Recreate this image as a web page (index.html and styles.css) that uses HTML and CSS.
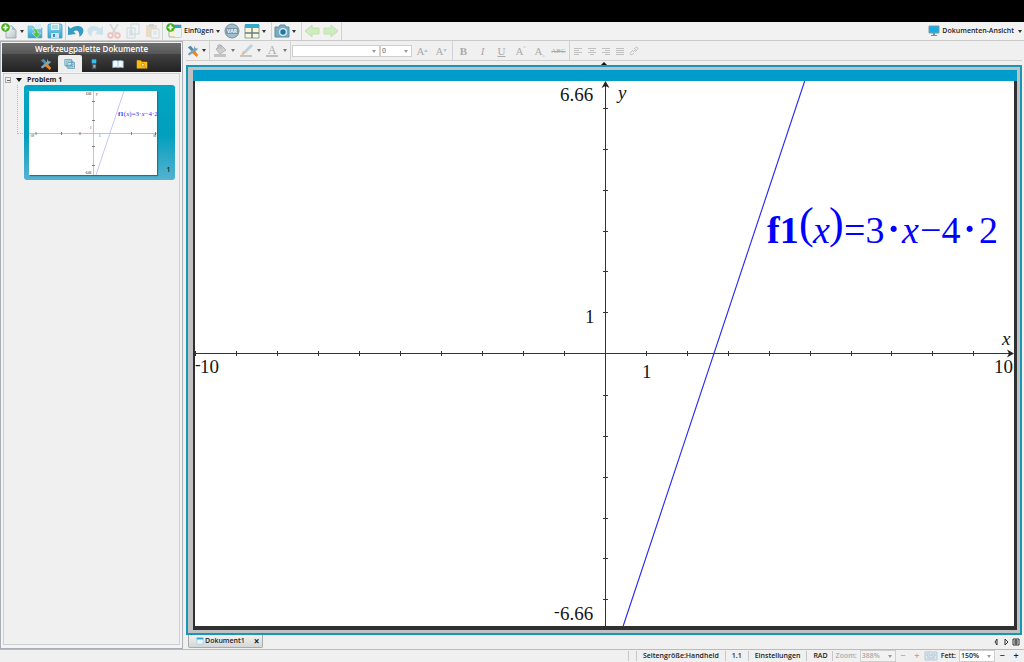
FILE: index.html
```html
<!DOCTYPE html>
<html lang="de">
<head>
<meta charset="utf-8">
<title>Dokument1</title>
<link rel="stylesheet" href="styles.css">
</head>
<body>
<svg class="defs" aria-hidden="true">
  <defs>
    <linearGradient id="sky" x1="0" y1="0" x2="0" y2="1"><stop offset="0" stop-color="#8fd8f5"/><stop offset="1" stop-color="#2f9fce"/></linearGradient>
    <linearGradient id="paper" x1="0" y1="0" x2="1" y2="1"><stop offset="0" stop-color="#ffffff"/><stop offset="1" stop-color="#b9c2c6"/></linearGradient>
    <symbol id="plus" viewBox="0 0 8 8"><circle cx="4" cy="4" r="3.800" fill="#43ad1c"/><path d="M4 1.600v4.800M1.600 4h4.800" stroke="#fff" stroke-width="1.500"/></symbol>
    <symbol id="tools" viewBox="0 0 16 16"><path d="M1 3l4-2 8 10-2 2L5 7z" fill="#4b8cae"/><path d="M10 1l1 3 4 1-3 3-9 6-2-2 8-7z" fill="#7fa3b4"/><path d="M9 8l6 5-2 3-6-5z" fill="#f2861a"/></symbol>
    <symbol id="arrow" viewBox="0 0 16 16"><path d="M1 8l7-6v3h7v6H8v3z" fill="#cfecc0" stroke="#bfe2ae"/></symbol>
    <symbol id="curl" viewBox="0 0 16 14"><path d="M0 2v9l8-1-2.500-2.500c3-2 6-1 6 5.500 6-4 5-11-2-11-3 0-5 1-7 2.500z"/></symbol>
  </defs>
</svg>

<div class="screen-top"></div>

<header class="toolbar">
  <div class="group">
    <button class="icon" aria-label="Neu"><svg viewBox="0 0 16 16"><path d="M5 3h6l4 4v8H5z" fill="url(#paper)" stroke="#8fa3ac" stroke-width=".8"/><path d="M11 3v4h4" fill="#9fc6d8"/><use href="#plus" width="9" height="9"/></svg></button>
    <button class="drop" aria-label="Neu-Menü"></button>
    <button class="icon" aria-label="Öffnen"><svg viewBox="0 0 16 16"><path d="M1 3h5l1 2h8v10H1z" fill="url(#sky)" stroke="#5fb1d3" stroke-width=".6"/><path d="M8 1h6v5H8z" fill="#d7eef7"/><path d="M5 6c3-1 6 0 6 4h3l-4 5-5-5h3c0-2-1-3-3-4z" fill="#5cc038" stroke="#e8f6e0" stroke-width=".5"/></svg></button>
    <button class="icon save" aria-label="Speichern"><svg viewBox="0 0 16 16"><path d="M2 1h12l1 1v13H1V2z" fill="url(#sky)" stroke="#4b9fc4" stroke-width=".8"/><path d="M4 1h8v6H4z" fill="#e4f4fa"/><path d="M4 10h8v5H4z" fill="#c7e5f1"/><path d="M6 11h2v3H6z" fill="#3791b9"/><path d="M5 3h6M5 5h6" stroke="#7fbbd5"/></svg></button>
  </div>
  <div class="group spaced">
    <button class="icon" aria-label="Rückgängig"><svg viewBox="0 0 16 16"><use href="#curl" y="1" width="16" height="14" fill="#359ac5"/></svg></button>
    <button class="icon faded" aria-label="Wiederholen" disabled><svg viewBox="0 0 16 16"><g transform="translate(16 1) scale(-1 1)"><use href="#curl" width="16" height="14" fill="#83c7e3"/></g></svg></button>
    <button class="icon faded" aria-label="Ausschneiden" disabled><svg viewBox="0 0 16 16"><path d="M4 1l6 10M12 1L6 11" stroke="#9ca5aa" stroke-width="1.600"/><g fill="none" stroke="#e26558" stroke-width="1.800"><circle cx="4.500" cy="12.500" r="2.300"/><circle cx="11.500" cy="12.500" r="2.300"/></g></svg></button>
    <button class="icon faded" aria-label="Kopieren" disabled><svg viewBox="0 0 16 16"><g fill="#eef5f8" stroke="#83aabd"><path d="M6 1h8v10H6zM2 5h8v10H2z"/><path d="M4 8h4M4 10h4M4 12h4"/></g></svg></button>
    <button class="icon faded" aria-label="Einfügen" disabled><svg viewBox="0 0 16 16"><path d="M2 2h11v12H2z" fill="#e2b36c"/><path d="M5 1h5v3H5z" fill="#8ba2ad"/><path d="M7 6h8v9H7z" fill="#f4f8f9" stroke="#91aebb"/><path d="M9 9h4M9 11h4" stroke="#94b5c4"/></svg></button>
  </div>
  <div class="group">
    <button class="insert"><svg viewBox="0 0 16 16"><path d="M3 2h12v12H3z" fill="#faf3d6" stroke="#809dab" stroke-width=".7"/><path d="M3 2h12v3H3z" fill="#2ca3cd"/><path d="M9 5h6v9H9z" fill="#e9f4f7"/><use href="#plus" width="9" height="9"/></svg><span>Einfügen</span></button>
    <button class="drop" aria-label="Einfügen-Menü"></button>
    <button class="icon" aria-label="Variablen"><svg viewBox="0 0 16 16"><circle cx="8" cy="8" r="7" fill="#a3bccb" stroke="#7591a1"/><path d="M2 5h12v6H2z" fill="#7995a7"/><text x="8" y="10" class="var-label">VAR</text></svg></button>
    <button class="icon layout" aria-label="Seitenlayout"><svg viewBox="0 0 16 16"><path d="M1 2h14v13H1z" fill="#fcf6d5" stroke="#708d9a" stroke-width=".8"/><path d="M1 1h14v4H1z" fill="#36a9cd"/><path d="M8 5v10M1 10h14" stroke="#617e89" stroke-width="1.400"/></svg></button>
    <button class="drop" aria-label="Layout-Menü"></button>
  </div>
  <div class="group spaced">
    <button class="icon" aria-label="Bildschirmfoto"><svg viewBox="0 0 16 16"><path d="M1 4h4l1-2h5l1 2h3v10H1z" fill="#76adc6" stroke="#608fa5"/><circle cx="9" cy="9" r="4" fill="#d5edf5"/><circle cx="9" cy="9" r="2.700" fill="#2378a1"/><path d="M2 6h2" stroke="#e79a41"/></svg></button>
    <button class="drop" aria-label="Foto-Menü"></button>
  </div>
  <div class="group spaced arrows">
    <button class="icon" aria-label="Zurück" disabled><svg viewBox="0 0 16 16"><use href="#arrow" width="16" height="16"/></svg></button>
    <button class="icon" aria-label="Vorwärts" disabled><svg viewBox="0 0 16 16"><g transform="translate(16 0) scale(-1 1)"><use href="#arrow" width="16" height="16"/></g></svg></button>
  </div>
  <button class="view-menu"><svg viewBox="0 0 12 12"><path d="M1 1h10v7H1z" fill="#18ace6" stroke="#7b9caa"/><path d="M5 8h2v2h2v1H3v-1h2z" fill="#7793a0"/></svg><span>Dokumenten-Ansicht</span><i class="caret"></i></button>
</header>

<main class="workspace">
  <aside class="sidebar">
    <section class="palette">
      <h1>Werkzeugpalette Dokumente</h1>
      <nav class="palette-tabs">
        <button aria-label="Dokumentwerkzeuge"><svg viewBox="0 0 16 16"><use href="#tools" width="16" height="16"/></svg></button>
        <button class="active" aria-label="Seitensortierer"><svg viewBox="0 0 16 16"><g fill="#d3eaf3" stroke="#5b9ab4"><path d="M1 2h9v8H1zM3 4h9v8H3zM5 6h9v8H5z"/><path d="M7 12l5-4M7 8l5 4" fill="none"/></g></svg></button>
        <button aria-label="Handheld"><svg viewBox="0 0 16 16"><path d="M5 1h6v14H5z" fill="#404e56"/><path d="M5 2h6v5H5z" fill="#35bff0"/><path d="M7 9h3v4H7z" fill="#a3adb1"/></svg></button>
        <button aria-label="Dienstprogramme"><svg viewBox="0 0 16 16"><path d="M1 4c3-1 5-1 7 0 2-1 4-1 7 0v9c-3-1-5-1-7 0-2-1-4-1-7 0z" fill="#f4faff" stroke="#7fb3d0"/><path d="M8 4v9" stroke="#8ab1c7"/></svg></button>
        <button aria-label="Inhalts-Explorer"><svg viewBox="0 0 16 16"><path d="M1 3h5l2 2h7v9H1z" fill="#fdbc09"/><circle cx="9" cy="9" r="2" fill="#fff3b4" stroke="#a67c13"/><path d="M11 11l3 3" stroke="#ae780c"/></svg></button>
      </nav>
    </section>
    <section class="tree">
      <div class="problem"><button class="collapse" aria-label="Zuklappen"></button><i class="open-mark"></i><h2>Problem 1</h2></div>
      <div class="branch">
        <button class="thumb" aria-label="Seite 1">
          <svg class="preview" viewBox="29 91 128 84">
            <path d="M29 133.500H157M93.500 91V175" stroke="#aaa" fill="none" stroke-width=".7"/>
            <path d="M36 132v3M61.500 132v3M80 132v3M131.500 132v3M155.500 132v3M92 101.500h3M92 120.500h3M92 146.500h3M92 165.500h3" stroke="#555" stroke-width=".7"/>
            <path d="M124 91L96 175" stroke="#b8b8fa" stroke-width=".8"/>
            <g class="tiny"><text x="86" y="95">6.66</text><text x="96" y="95">y</text><text x="30" y="137">-10</text><text x="90" y="129">1</text><text x="99" y="137">1</text><text x="153" y="137">10</text><text x="85" y="174">-6.66</text></g>
            <text class="mini-formula" x="118" y="116"><tspan class="bold">f1</tspan>(<tspan class="italic">x</tspan>)=3·<tspan class="italic">x</tspan>−4·2</text>
          </svg>
          <span class="page-no">1</span>
        </button>
      </div>
    </section>
  </aside>

  <section class="editor">
    <div class="format">
      <div class="group">
        <button class="icon small" aria-label="Werkzeuge"><svg viewBox="0 0 16 16"><use href="#tools" width="16" height="16"/></svg></button>
        <button class="drop" aria-label="Werkzeug-Menü"></button>
      </div>
      <div class="group colors">
        <button class="icon" aria-label="Füllfarbe" disabled><svg viewBox="0 0 16 16"><path d="M4 6l5-4 5 5-6 4z" fill="#cfcfcf" stroke="#b5b5b5"/><path d="M6 6V2h3v4" fill="none" stroke="#aaa"/><path d="M2 11h12v3H2z" fill="#c3c3c3"/></svg></button><button class="drop" aria-label="Füllfarben" disabled></button>
        <button class="icon" aria-label="Linienfarbe" disabled><svg viewBox="0 0 16 16"><path d="M13 1l2 2-7 7-3-1z" fill="#b9d2df"/><path d="M5 8l3 2-5 3z" fill="#dfbd90"/><path d="M2 12h12v2H2z" fill="#c5c5c5"/></svg></button><button class="drop" aria-label="Linienfarben" disabled></button>
        <button class="icon" aria-label="Textfarbe" disabled><svg viewBox="0 0 16 16"><text x="8" y="11" class="color-letter">A</text><path d="M2 12h12v2H2z" fill="#bebebe"/></svg></button><button class="drop" aria-label="Textfarben" disabled></button>
      </div>
      <div class="group fonts">
        <span class="select font-name"><select aria-label="Schriftart" disabled><option></option></select></span>
        <span class="select font-size"><select aria-label="Schriftgröße" disabled><option>0</option></select></span>
        <button class="letter first" aria-label="Größer" disabled>A<i class="caret up"></i></button>
        <button class="letter" aria-label="Kleiner" disabled>A<i class="caret"></i></button>
      </div>
      <div class="group styles">
        <button class="letter bold" disabled>B</button><button class="letter italic" disabled>I</button><button class="letter underline" disabled>U</button><button class="letter" disabled>A<sup>a</sup></button><button class="letter" disabled>A<sub>a</sub></button><button class="letter strike" disabled>ABC</button>
      </div>
      <div class="group align">
        <button aria-label="Links" disabled><svg viewBox="0 0 10 10"><path d="M1 2.500h8M1 4.500h5M1 6.500h8M1 8.500h5"/></svg></button>
        <button aria-label="Zentriert" disabled><svg viewBox="0 0 10 10"><path d="M1 2.500h8M3 4.500h4M1 6.500h8M3 8.500h4"/></svg></button>
        <button aria-label="Rechts" disabled><svg viewBox="0 0 10 10"><path d="M1 2.500h8M4 4.500h5M1 6.500h8M4 8.500h5"/></svg></button>
        <button aria-label="Blocksatz" disabled><svg viewBox="0 0 10 10"><path d="M1 2.500h8M1 4.500h8M1 6.500h8M1 8.500h8"/></svg></button>
        <button aria-label="Link" disabled><svg viewBox="0 0 10 10"><path d="M4 6l3-3M5 3l1-1c2-2 4 0 2 2L6 6M5 7L4 8c-2 2-4 0-2-2l2-2" fill="none"/></svg></button>
      </div>
    </div>
    <button class="fold" aria-label="Einklappen"></button>

    <div class="document">
      <div class="title-strip"></div>
      <div class="page">
        <svg class="graph" viewBox="195 81 819 545" preserveAspectRatio="xMidYMid meet" role="img" aria-label="Graph von f1">
          <g class="axis">
            <path d="M195 353.500H1013M605.500 82V626"/>
            <path d="M195.500 351v5M236.500 351v5M277.500 351v5M318.500 351v5M359.500 351v5M400.500 351v5M441.500 351v5M482.500 351v5M523.500 351v5M564.500 351v5M605.500 351v5M646.500 351v5M687.500 351v5M728.500 351v5M769.500 351v5M810.500 351v5M851.500 351v5M891.500 351v5M932.500 351v5M973.500 351v5"/>
            <path d="M603 108.500h5M603 149.500h5M603 190.500h5M603 231.500h5M603 271.500h5M603 312.500h5M603 353.500h5M603 395.500h5M603 436.500h5M603 477.500h5M603 518.500h5M603 558.500h5M603 599.500h5"/>
          </g>
          <path d="M605.500 81l4 7-4-2-4 2zM1014 353.500l-7-4 2 4-2 4z" fill="#222"/>
          <path d="M804.700 81L623.200 626" stroke="#2424ee" stroke-width="1.100"/>
          <g class="labels">
            <text x="560" y="101">6.66</text>
            <text class="italic" x="618" y="99">y</text>
            <text x="585" y="323">1</text>
            <text x="642" y="378">1</text>
            <text x="200" y="373">10</text><text class="minus" x="195" y="370">-</text>
            <text class="italic" x="1002" y="345">x</text>
            <text x="994" y="373">10</text>
            <text x="560" y="620">6.66</text><text class="minus" x="554" y="617">-</text>
          </g>
          <g class="formula">
            <text class="bold" x="767" y="243">f1</text>
            <text class="paren" x="799" y="238">(</text>
            <text class="italic" x="813" y="243">x</text>
            <text class="paren" x="829" y="238">)</text>
            <text x="844" y="243">=3</text>
            <text class="dot" x="885" y="246">·</text>
            <text class="italic" x="902" y="243">x</text>
            <text x="920" y="243">−4</text>
            <text class="dot" x="961" y="246">·</text>
            <text x="979" y="243">2</text>
          </g>
        </svg>
      </div>
    </div>

    <div class="tabs">
      <div class="tab"><svg viewBox="0 0 10 10"><path d="M1 1h8v8H1z" fill="#e8f7fd" stroke="#9ed0e5"/><path d="M1 1h8v2H1z" fill="#2a9fca"/></svg><span>Dokument1</span><button aria-label="Schließen">×</button></div>
      <div class="tab-nav">
        <button aria-label="Vorheriges"><svg viewBox="0 0 8 8"><path d="M5 1v6L3 4z"/></svg></button>
        <button aria-label="Nächstes"><svg viewBox="0 0 8 8"><path d="M3 1v6l3-3z"/></svg></button>
        <button aria-label="Liste"><svg viewBox="0 0 8 8"><path d="M1 1h6v6H1zM2 3h4M2 5h4M4 1v6"/></svg></button>
      </div>
    </div>
  </section>
</main>

<footer class="status">
  <span class="cell empty"></span>
  <span class="cell">Seitengröße:Handheld</span>
  <span class="cell version">1.1</span>
  <button class="cell">Einstellungen</button>
  <button class="cell angle">RAD</button>
  <label class="muted" for="zoom">Zoom:</label>
  <span class="select zoom"><select id="zoom" disabled><option>388%</option></select></span>
  <button class="step muted" disabled>−</button>
  <button class="step muted" disabled>+</button>
  <button class="fit" aria-label="Einpassen" disabled><svg viewBox="0 0 14 10"><path d="M1 1h12v8H1z" fill="#dfe9f2" stroke="#b7c7d5"/><path d="M3 3h3v2H3zM8 3h3v2H8zM3 7h8" fill="#fff" stroke="#b1c3d2"/></svg></button>
  <label for="bold">Fett:</label>
  <span class="select boldness"><select id="bold"><option>150%</option></select></span>
  <button class="step">−</button>
  <button class="step">+</button>
</footer>
</body>
</html>
```

FILE: styles.css
```css
* { box-sizing: border-box; }
body {
  margin: 0;
  height: 100vh;
  display: flex;
  flex-direction: column;
  overflow: hidden;
  background: #f0f0f0;
  color: #1c1c1c;
  font: 600 7px/10px "Open Sans", "Noto Sans", sans-serif;
}
button, select { font: inherit; color: inherit; margin: 0; padding: 0; border: 0; background: none; }
button { display: flex; align-items: center; justify-content: center; flex: none; }
svg { display: block; flex: none; }
h1, h2 { margin: 0; }
.defs { position: absolute; width: 0; height: 0; }
.screen-top { height: 22px; flex: none; background: #000; }

.toolbar { height: 19px; flex: none; display: flex; align-items: center; border-bottom: 1px solid #cbcbcb; background: #f2f2f2; }
.group { display: flex; align-items: center; height: 18px; padding: 0 1px; border-right: 1px solid #d2d2d2; }
.toolbar .group { padding-right: 2px; }
.toolbar .spaced { gap: 3px; padding-left: 2px; }
.icon { width: 16px; height: 16px; }
.icon svg { width: 16px; height: 16px; }
.icon.save, .icon.layout { margin-left: 4px; }
.faded svg { opacity: .35; }
.drop { width: 9px; height: 14px; }
.drop::before, .caret { content: ""; border: 2px solid transparent; border-top: 3px solid #333; border-bottom: 0; }
.drop:disabled::before { border-top-color: #777; }
.spaced .drop { margin-left: -3px; }
.insert { padding-left: 2px; gap: 2px; }
.insert svg { width: 16px; height: 16px; }
.drop + .icon { margin-left: 1px; }
.var-label { font: 700 5px "Open Sans", sans-serif; fill: #fff; text-anchor: middle; }
.view-menu { margin-left: auto; gap: 2px; padding-right: 2px; }
.view-menu svg { width: 12px; height: 12px; }
.view-menu .caret { margin-left: 2px; }

.workspace { flex: 1; min-height: 0; display: flex; border-bottom: 1px solid #b8bbbf; }
.sidebar { width: 183px; flex: none; display: flex; flex-direction: column; padding: 1px; border: 1px solid #a9adb7; background: #f4f4f4; }
.palette { background: #292929; }
.palette h1 { height: 11px; background: linear-gradient(#6e6e6e, #565656); color: #fff; font-size: 8px; line-height: 11px; text-align: center; font-weight: 600; }
.palette-tabs { height: 18px; display: flex; justify-content: center; background: linear-gradient(#414141, #222); padding: 1px 0 0 4px; }
.palette-tabs button { width: 24px; }
.palette-tabs svg { width: 12px; height: 12px; }
.palette-tabs .active { background: #eee; border-radius: 2px 2px 0 0; }
.tree { flex: 1; margin: 1px 1px 2px; padding: 1px; border: 1px solid #d0d0d0; background: #f0f0f0; }
.problem { display: flex; align-items: center; height: 10px; gap: 5px; }
.problem h2 { font-size: 7px; line-height: 10px; font-weight: 700; }
.collapse { width: 6px; height: 6px; border: 1px solid #aaa; }
.collapse::before { content: ""; width: 3px; height: 1px; background: #666; }
.open-mark { width: 6px; border: 3px solid transparent; border-top: 4px solid #111; border-bottom: 0; }
.branch { margin-left: 12px; padding: 0 3px 0 7px; position: relative; }
.branch::before { content: ""; position: absolute; left: 0; top: 0; width: 7px; height: 48px; border: 1px dotted #bbb; border-width: 0 0 1px 1px; }
.thumb { width: 100%; padding: 6px 4px 5px 5px; gap: 9px; align-items: flex-end; border-radius: 3px; position: relative; background: linear-gradient(#00a7c3, #009fbd 52%, #55b2d1); }
.preview { flex: 1; min-width: 0; background: #fff; box-shadow: 1px 1px 1px #376b7b; }
.page-no { font-size: 7px; line-height: 10px; width: 5px; }
.tiny { font: 3px "Liberation Serif", serif; }
.mini-formula { font: 7px "Liberation Serif", serif; fill: #3535ed; }

.editor { flex: 1; min-width: 0; display: flex; flex-direction: column; padding: 0 2px 0 3px; }
.format { height: 20px; flex: none; display: flex; align-items: center; border-bottom: 1px solid #cfcfcf; color: #aaa; }
.format .group { height: 19px; padding: 0 1px; }
.format .small svg { width: 12px; height: 12px; }
.icon.small { width: 12px; }
.format .colors .icon { margin-left: 1px; }
.color-letter { font: 12px "Liberation Serif", serif; fill: #aaa; text-anchor: middle; }
.select { display: inline-flex; position: relative; flex: none; background: #fff; border: 1px solid #cfcfcf; }
.select select { width: 100%; height: 10px; padding-left: 1px; appearance: none; line-height: 10px; opacity: 1; }
.select::after { content: ""; position: absolute; right: 3px; top: 4px; border: 2px solid transparent; border-top: 3px solid #999; border-bottom: 0; pointer-events: none; }
.font-name { width: 88px; }
.font-size { width: 32px; }
.font-size select { color: #888; }
.letter { width: 19px; font: 11px/14px "Liberation Serif", serif; color: #aaa; }
.letter.first { margin-left: 1px; }
.fonts { width: 162px; }
.letter .caret { border-top-color: #a9cfdf; }
.letter .caret.up { border-top: 0; border-bottom: 3px solid #a9cfdf; }
.letter sup, .letter sub { font-size: 5px; line-height: 5px; color: #a9cfdf; }
.letter sup { align-self: flex-start; }
.letter sub { align-self: flex-end; }
.bold { font-weight: 700; }
.italic { font-style: italic; }
.underline { text-decoration: underline; }
.strike { font-size: 7px; text-decoration: line-through; }
.format .align { border: 0; gap: 4px; padding-left: 3px; }
.align svg { width: 10px; height: 10px; stroke: #c0c0c0; stroke-width: 1; }
.fold { align-self: center; height: 4px; }
.fold::before { content: ""; border: 3px solid transparent; border-bottom: 3px solid #111; border-top: 0; }

.document { flex: 1; min-height: 0; display: flex; flex-direction: column; border: 2px solid #1995b6; padding: 3px 3px 3px 5px; background: #bfc1c3; }
.title-strip { height: 11px; flex: none; background: #009dcb; }
.page { flex: 1; min-height: 0; border: solid #303030; border-width: 0 3px 4px 2px; background: #fff; }
.graph { width: 100%; height: 100%; }
.axis { fill: none; stroke: #333; stroke-width: 1; }
.labels { font: 19px "Liberation Serif", serif; fill: #151515; }
.minus { font-size: 17px; }
.formula { font: 38px "Liberation Serif", serif; fill: #00f; }
.paren { font-size: 44px; }
.dot { font-size: 52px; }

.tabs { height: 14px; flex: none; display: flex; justify-content: space-between; align-items: flex-start; padding-left: 2px; }
.tab { display: flex; align-items: center; width: 75px; height: 13px; padding: 0 2px 0 7px; gap: 1px; border: 1px solid #aaa; border-top: 0; border-radius: 0 0 2px 2px; background: linear-gradient(#f2f2f2, #d6d6d6); }
.tab svg { width: 8px; height: 8px; }
.tab button { margin-left: auto; font-size: 10px; font-weight: 700; width: 7px; }
.tab-nav { display: flex; align-self: center; gap: 2px; padding-right: 2px; }
.tab-nav svg { width: 8px; height: 8px; fill: none; stroke: #333; stroke-width: 1; }

.status { height: 12px; flex: none; display: flex; justify-content: flex-end; align-items: center; padding-right: 1px; white-space: nowrap; }
.status .cell { border-right: 1px solid #c6c6c6; padding: 0 6px; line-height: 10px; }
.status .empty { width: 9px; height: 10px; padding: 0; border-left: 1px solid #c6c6c6; }
.status .angle { padding-right: 4px; }
.status label { margin: 0 3px; }
.muted { color: #aaa; }
.zoom, .boldness { width: 36px; }
.zoom { background: #f2f2f2; color: #aaa; }
.step { width: 14px; font-size: 9px; }
.fit svg { width: 14px; height: 10px; }
```
